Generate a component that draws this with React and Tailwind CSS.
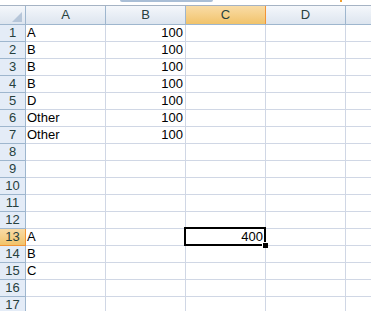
import React from 'react';

const cols = ['A', 'B', 'C', 'D'];

const data = {
  1: ['A', '100'],
  2: ['B', '100'],
  3: ['B', '100'],
  4: ['B', '100'],
  5: ['D', '100'],
  6: ['Other', '100'],
  7: ['Other', '100'],
  13: ['A', ''],
  14: ['B', ''],
  15: ['C', ''],
};

function ColHeader({ label, active }) {
  return (
    <div
      className={
        active
          ? 'w-[80px] h-full flex items-center justify-center border-r border-[#f29436] bg-gradient-to-b from-[#f9dca6] to-[#f1c36a] text-[#27413e]'
          : 'w-[80px] h-full flex items-center justify-center border-r border-[#9eb6ce] bg-gradient-to-b from-[#f4f7fb] to-[#dde5ef] text-[#27413e]'
      }
    >
      {label}
    </div>
  );
}

function Row({ n }) {
  const [a, b] = data[n] || ['', ''];
  const active = n === 13;
  return (
    <div className="flex h-[17px] leading-[16px]">
      <div
        className={
          active
            ? 'w-[26px] shrink-0 text-center border-r border-b border-[#f29436] bg-gradient-to-b from-[#f9dca6] to-[#f1c36a] text-[#27413e]'
            : 'w-[26px] shrink-0 text-center border-r border-b border-[#9eb6ce] bg-[#e4ecf7] text-[#27413e]'
        }
      >
        {n}
      </div>
      <div className="w-[80px] shrink-0 border-r border-b border-[#d0d7e5] pl-[1px]">{a}</div>
      <div className="w-[80px] shrink-0 border-r border-b border-[#d0d7e5] pr-[2px] text-right">{b}</div>
      <div className="w-[80px] shrink-0 border-r border-b border-[#d0d7e5] pr-[2px] text-right relative">
        {active && (
          <>
            <span className="relative z-10">400</span>
            <div className="absolute -left-[2px] -top-[2px] w-[82px] h-[19px] border-2 border-black z-20" />
            <div className="absolute -right-[3px] -bottom-[3px] w-[6px] h-[6px] bg-black border-l border-t border-white z-30" />
          </>
        )}
      </div>
      <div className="w-[80px] shrink-0 border-r border-b border-[#d0d7e5]" />
      <div className="flex-1 border-b border-[#d0d7e5]" />
    </div>
  );
}

export default function App() {
  const rows = Array.from({ length: 17 }, (_, i) => i + 1);
  return (
    <div className="w-[371px] h-[311px] overflow-hidden bg-white text-[13px] text-black font-['Liberation_Sans',Arial,sans-serif]">
      <div className="relative h-[6px] border-b border-[#a5b3c4] bg-white">
        <div className="absolute left-[120px] top-0 w-[93px] h-[2px] rounded-b-[2px] bg-[#a9bed6]" />
        <div className="absolute left-[340px] top-0 w-[2px] h-[2px] bg-[#f0a030]" />
      </div>
      <div className="flex h-[19px] border-b border-[#9eb6ce]">
        <div className="w-[26px] shrink-0 h-full border-r border-[#9eb6ce] bg-gradient-to-b from-[#f4f7fb] to-[#dde5ef] relative">
          <svg className="absolute right-[3px] bottom-[2px]" width="10" height="10" viewBox="0 0 10 10">
            <polygon points="10,0 10,10 0,10" fill="#b6c6d9" />
          </svg>
        </div>
        {cols.map((c) => (
          <ColHeader key={c} label={c} active={c === 'C'} />
        ))}
        <div className="flex-1 h-full bg-gradient-to-b from-[#f4f7fb] to-[#dde5ef]" />
      </div>
      {rows.map((n) => (
        <Row key={n} n={n} />
      ))}
    </div>
  );
}
